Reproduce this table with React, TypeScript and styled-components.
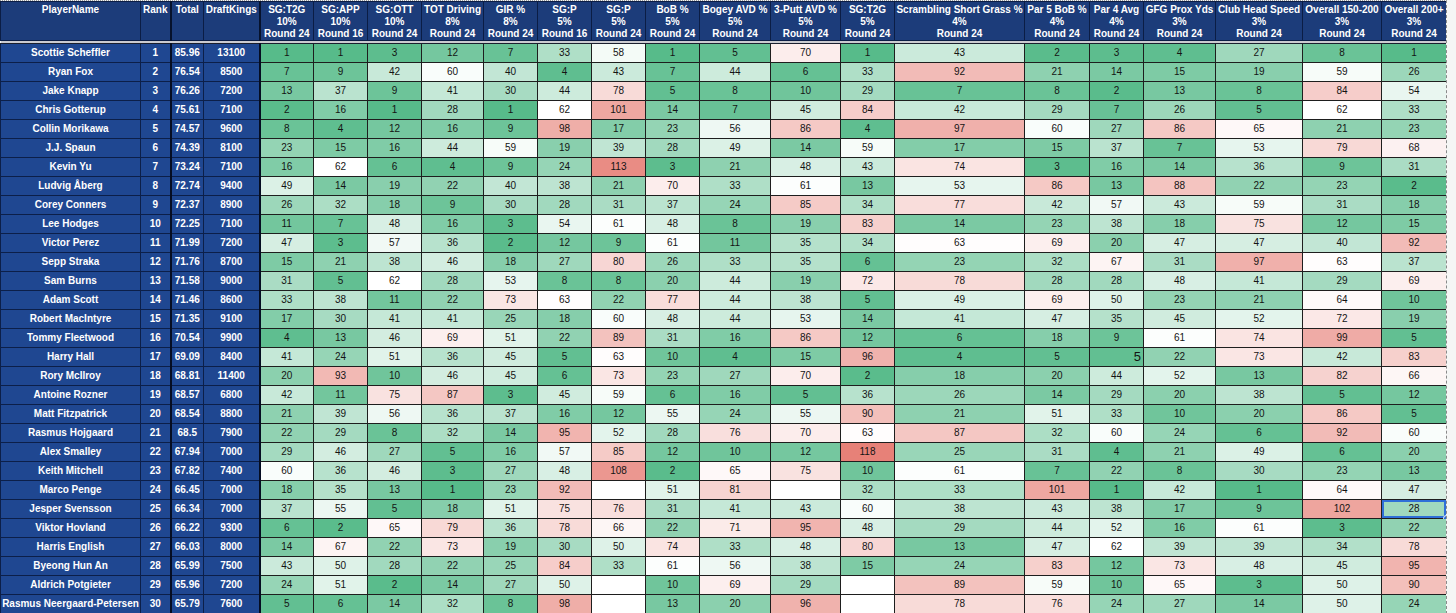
import React from 'react';
import styled, { createGlobalStyle } from 'styled-components';

const GlobalStyle = createGlobalStyle`
  html, body {
    margin: 0;
    padding: 0;
    background: #f5f6f5;
  }
  body {
    font-family: "Liberation Sans", Arial, Helvetica, sans-serif;
  }
`;

type StatColumn = { title: string; weight: string; round: string; width: number };

const leadColumns = [
  { title: 'PlayerName', width: 140 },
  { title: 'Rank', width: 30 },
  { title: 'Total', width: 33 },
  { title: 'DraftKings', width: 56 },
];

const statColumns: StatColumn[] = [
  { title: 'SG:T2G', weight: '10%', round: 'Round 24', width: 54 },
  { title: 'SG:APP', weight: '10%', round: 'Round 16', width: 54 },
  { title: 'SG:OTT', weight: '10%', round: 'Round 24', width: 54 },
  { title: 'TOT Driving', weight: '8%', round: 'Round 24', width: 62 },
  { title: 'GIR %', weight: '8%', round: 'Round 24', width: 54 },
  { title: 'SG:P', weight: '5%', round: 'Round 16', width: 54 },
  { title: 'SG:P', weight: '5%', round: 'Round 24', width: 54 },
  { title: 'BoB %', weight: '5%', round: 'Round 24', width: 54 },
  { title: 'Bogey AVD %', weight: '5%', round: 'Round 24', width: 71 },
  { title: '3-Putt AVD %', weight: '5%', round: 'Round 24', width: 70 },
  { title: 'SG:T2G', weight: '5%', round: 'Round 24', width: 54 },
  { title: 'Scrambling Short Grass %', weight: '4%', round: 'Round 24', width: 130 },
  { title: 'Par 5 BoB %', weight: '4%', round: 'Round 24', width: 65 },
  { title: 'Par 4 Avg', weight: '4%', round: 'Round 24', width: 54 },
  { title: 'GFG Prox Yds', weight: '3%', round: 'Round 24', width: 72 },
  { title: 'Club Head Speed', weight: '3%', round: 'Round 24', width: 87 },
  { title: 'Overall 150-200', weight: '3%', round: 'Round 24', width: 79 },
  { title: 'Overall 200+', weight: '3%', round: 'Round 24', width: 65 },
];

type Player = [string, number, string, number, (number | null)[]];

const _ = null;

const players: Player[] = [
  ['Scottie Scheffler', 1, '85.96', 13100, [1, 1, 3, 12, 7, 33, 58, 1, 5, 70, 1, 43, 2, 3, 4, 27, 8, 1]],
  ['Ryan Fox', 2, '76.54', 8500, [7, 9, 42, 60, 40, 4, 43, 7, 44, 6, 33, 92, 21, 14, 15, 19, 59, 26]],
  ['Jake Knapp', 3, '76.26', 7200, [13, 37, 9, 41, 30, 44, 78, 5, 8, 10, 29, 7, 8, 2, 13, 8, 84, 54]],
  ['Chris Gotterup', 4, '75.61', 7100, [2, 16, 1, 28, 1, 62, 101, 14, 7, 45, 84, 42, 29, 7, 26, 5, 62, 33]],
  ['Collin Morikawa', 5, '74.57', 9600, [8, 4, 12, 16, 9, 98, 17, 23, 56, 86, 4, 97, 60, 27, 86, 65, 21, 23]],
  ['J.J. Spaun', 6, '74.39', 8100, [23, 15, 16, 44, 59, 19, 39, 28, 49, 14, 59, 17, 15, 37, 7, 53, 79, 68]],
  ['Kevin Yu', 7, '73.24', 7100, [16, 62, 6, 4, 9, 24, 113, 3, 21, 48, 43, 74, 3, 16, 14, 36, 9, 31]],
  ['Ludvig Åberg', 8, '72.74', 9400, [49, 14, 19, 22, 40, 38, 21, 70, 33, 61, 13, 53, 86, 13, 88, 22, 23, 2]],
  ['Corey Conners', 9, '72.37', 8900, [26, 32, 18, 9, 30, 28, 31, 37, 24, 85, 34, 77, 42, 57, 43, 59, 31, 18]],
  ['Lee Hodges', 10, '72.25', 7100, [11, 7, 48, 16, 3, 54, 61, 48, 8, 19, 83, 14, 23, 38, 18, 75, 12, 15]],
  ['Victor Perez', 11, '71.99', 7200, [47, 3, 57, 36, 2, 12, 9, 61, 11, 35, 34, 63, 69, 20, 47, 47, 40, 92]],
  ['Sepp Straka', 12, '71.76', 8700, [15, 21, 38, 46, 18, 27, 80, 26, 33, 35, 6, 23, 32, 67, 31, 97, 63, 37]],
  ['Sam Burns', 13, '71.58', 9000, [31, 5, 62, 28, 53, 8, 8, 20, 44, 19, 72, 78, 28, 28, 48, 41, 29, 69]],
  ['Adam Scott', 14, '71.46', 8600, [33, 38, 11, 22, 73, 63, 22, 77, 44, 38, 5, 49, 69, 50, 23, 21, 64, 10]],
  ['Robert MacIntyre', 15, '71.35', 9100, [17, 30, 41, 41, 25, 18, 60, 48, 44, 53, 14, 41, 47, 35, 45, 52, 72, 19]],
  ['Tommy Fleetwood', 16, '70.54', 9900, [4, 13, 46, 69, 51, 22, 89, 31, 16, 86, 12, 6, 18, 9, 61, 74, 99, 5]],
  ['Harry Hall', 17, '69.09', 8400, [41, 24, 51, 36, 45, 5, 63, 10, 4, 15, 96, 4, 5, 5, 22, 73, 42, 83]],
  ['Rory McIlroy', 18, '68.81', 11400, [20, 93, 10, 46, 45, 6, 73, 23, 27, 70, 2, 18, 20, 44, 52, 13, 82, 66]],
  ['Antoine Rozner', 19, '68.57', 6800, [42, 11, 75, 87, 3, 45, 59, 6, 16, 5, 36, 26, 14, 29, 20, 38, 5, 12]],
  ['Matt Fitzpatrick', 20, '68.54', 8800, [21, 39, 56, 36, 37, 16, 12, 55, 24, 55, 90, 21, 51, 33, 10, 20, 86, 5]],
  ['Rasmus Hojgaard', 21, '68.5', 7900, [22, 29, 8, 32, 14, 95, 52, 28, 76, 70, 63, 87, 32, 60, 24, 6, 92, 60]],
  ['Alex Smalley', 22, '67.94', 7000, [29, 46, 27, 5, 16, 57, 85, 12, 10, 12, 118, 25, 31, 4, 21, 49, 6, 20]],
  ['Keith Mitchell', 23, '67.82', 7400, [60, 36, 46, 3, 27, 48, 108, 2, 65, 75, 10, 61, 7, 22, 8, 30, 23, 13]],
  ['Marco Penge', 24, '66.45', 7000, [18, 35, 13, 1, 23, 92, _, 51, 81, _, 32, 33, 101, 1, 42, 1, 64, 47]],
  ['Jesper Svensson', 25, '66.34', 7000, [37, 55, 5, 18, 51, 75, 76, 31, 41, 43, 60, 38, 43, 38, 17, 9, 102, 28]],
  ['Viktor Hovland', 26, '66.22', 9300, [6, 2, 65, 79, 36, 78, 66, 22, 71, 95, 48, 29, 44, 52, 16, 61, 3, 22]],
  ['Harris English', 27, '66.03', 8000, [14, 67, 22, 73, 19, 30, 50, 74, 33, 48, 80, 13, 47, 62, 39, 39, 34, 78]],
  ['Byeong Hun An', 28, '65.99', 7500, [43, 50, 28, 22, 25, 84, 33, 61, 56, 38, 15, 24, 83, 12, 73, 48, 45, 95]],
  ['Aldrich Potgieter', 29, '65.96', 7200, [24, 51, 2, 14, 27, 50, _, 10, 69, 29, _, 89, 59, 10, 65, 3, 50, 90]],
  ['Rasmus Neergaard-Petersen', 30, '65.79', 7600, [5, 6, 14, 32, 8, 98, _, 13, 20, 96, _, 78, 76, 24, 27, 14, 50, 24]],
];

// colour scale: low = green, middle = white, high = red
const GREEN = [87, 187, 138];
const WHITE = [255, 255, 255];
const RED = [230, 124, 115];
const MID = 62;
const MAX = 120;

const mix = (a: number[], b: number[], t: number) =>
  `rgb(${a.map((c, i) => Math.round(c + (b[i] - c) * t)).join(',')})`;

const heat = (v: number | null) => {
  if (v === null) return '#ffffff';
  if (v <= MID) return mix(GREEN, WHITE, Math.max(0, (v - 1) / (MID - 1)));
  return mix(WHITE, RED, Math.min(1, (v - MID) / (MAX - MID)));
};

// the odd cell in Harry Hall's Par 4 Avg column, and the selected cell
const isStray = (row: number, col: number) => row === 16 && col === 13;
const isSelected = (row: number, col: number) => row === 24 && col === 17;

const Sheet = styled.div`
  width: 1446px;
  border-top: 1px dotted #9a9a9a;
  border-right: 1px dashed #8a8a8a;
  overflow: hidden;
`;

const Grid = styled.table`
  width: 1446px;
  table-layout: fixed;
  border-collapse: collapse;
  font-size: 10px;
`;

const Col = styled.col<{ $w: number }>`
  width: ${(p) => p.$w}px;
`;

const HeadRow = styled.tr`
  height: 39px;
`;

const HeadCell = styled.th<{ $thick?: boolean }>`
  background: #1c3c7a;
  color: #ffffff;
  font-weight: 700;
  font-size: 10px;
  line-height: 12px;
  vertical-align: top;
  padding: 2px 0 0;
  border: 1px solid #0b1d45;
  border-right: ${(p) => (p.$thick ? '2px solid #06122c' : '1px solid #0b1d45')};
  white-space: nowrap;
  overflow: hidden;
`;

const SeparatorCell = styled.td`
  height: 2px;
  padding: 0;
  background: #cbcbd0;
  border-top: 1px solid #1a1f2e;
  border-bottom: 1px solid #1a1f2e;
`;

const BodyRow = styled.tr`
  height: 19px;
`;

const BlueCell = styled.td<{ $thick?: boolean }>`
  background: #1f4791;
  color: #ffffff;
  font-weight: 700;
  text-align: center;
  padding: 0;
  line-height: 16px;
  white-space: nowrap;
  overflow: hidden;
  border: 1px solid #0c1f49;
  border-right: ${(p) => (p.$thick ? '2px solid #050d22' : '1px solid #0c1f49')};
`;

const StatCell = styled.td<{ $stray?: boolean; $selected?: boolean }>`
  position: relative;
  color: #141414;
  text-align: ${(p) => (p.$stray ? 'right' : 'center')};
  font-size: ${(p) => (p.$stray ? '13px' : '10px')};
  padding: ${(p) => (p.$stray ? '0 2px 0 0' : '0')};
  line-height: 16px;
  border: 1px solid #1e1e1e;
  box-shadow: ${(p) => (p.$selected ? 'inset 0 0 0 2px #2f6fd8' : 'none')};
`;

const Handle = styled.span`
  position: absolute;
  right: -4px;
  bottom: -4px;
  width: 7px;
  height: 7px;
  border-radius: 50%;
  background: #2566d6;
  border: 1px solid #ffffff;
  box-sizing: border-box;
`;

const HeadLine = styled.div`
  white-space: nowrap;
`;

const App: React.FC = () => {
  return (
    <>
      <GlobalStyle />
      <Sheet>
        <Grid>
          <colgroup>
            {leadColumns.map((c) => (
              <Col key={c.title} $w={c.width} />
            ))}
            {statColumns.map((c, i) => (
              <Col key={i} $w={c.width} />
            ))}
          </colgroup>
          <thead>
            <HeadRow>
              {leadColumns.map((c, i) => (
                <HeadCell key={c.title} $thick={i === 1 || i === 3}>
                  {c.title}
                </HeadCell>
              ))}
              {statColumns.map((c, i) => (
                <HeadCell key={i}>
                  <HeadLine>{c.title}</HeadLine>
                  <HeadLine>{c.weight}</HeadLine>
                  <HeadLine>{c.round}</HeadLine>
                </HeadCell>
              ))}
            </HeadRow>
          </thead>
          <tbody>
            <tr>
              <SeparatorCell colSpan={leadColumns.length + statColumns.length} />
            </tr>
            {players.map(([name, rank, total, dk, stats], r) => (
              <BodyRow key={name}>
                <BlueCell>{name}</BlueCell>
                <BlueCell $thick>{rank}</BlueCell>
                <BlueCell>{total}</BlueCell>
                <BlueCell $thick>{dk}</BlueCell>
                {stats.map((v, c) => (
                  <StatCell
                    key={c}
                    $stray={isStray(r, c)}
                    $selected={isSelected(r, c)}
                    style={{ background: heat(v) }}
                  >
                    {v ?? ''}
                    {isSelected(r, c) && <Handle />}
                  </StatCell>
                ))}
              </BodyRow>
            ))}
          </tbody>
        </Grid>
      </Sheet>
    </>
  );
};

export default App;
